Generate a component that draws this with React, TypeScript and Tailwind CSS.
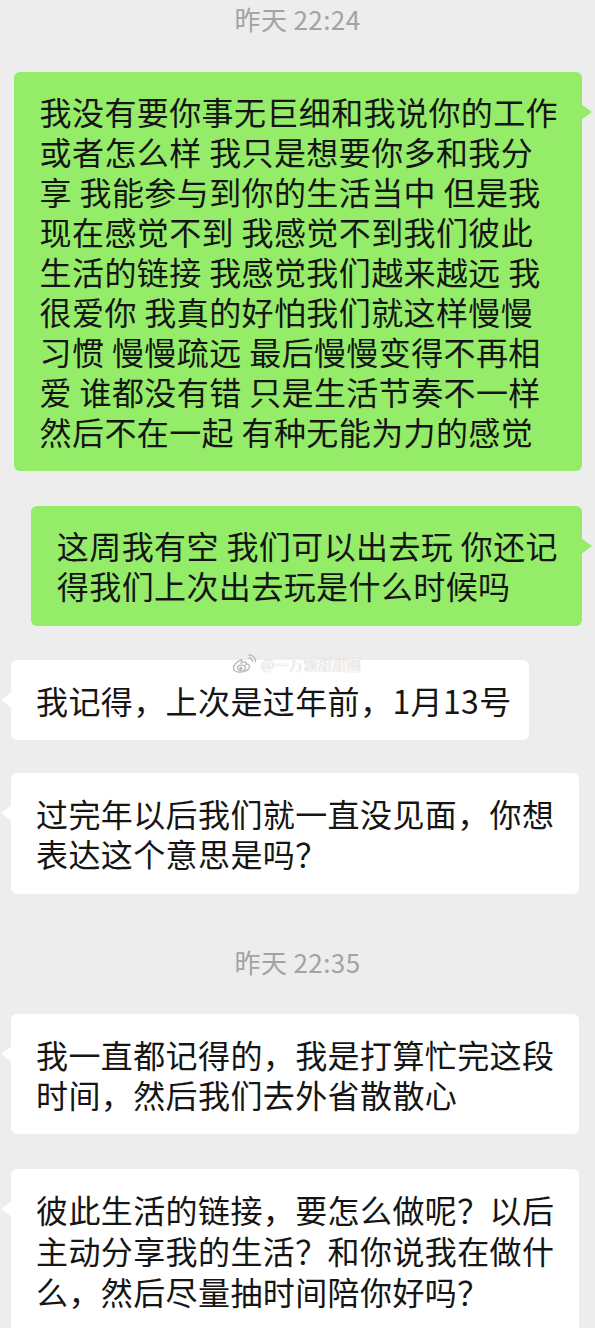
import type { ReactNode } from 'react';

const Time = ({ children, className = '' }: { children: ReactNode; className?: string }) => (
  <div className={`text-center text-[26px] leading-[38px] text-[#a3a3a3] ${className}`}>{children}</div>
);

const Mine = ({ lines, className = '' }: { lines: string[]; className?: string }) => (
  <div className={`relative self-end mr-[13px] rounded-[6px] bg-[#95ec69] pl-[26px] pr-[24px] pt-[19px] pb-[20px] ${className}`}>
    {lines.map((l, i) => (
      <div key={i} className="whitespace-pre">{l}</div>
    ))}
    <div className="absolute top-[32px] -right-[10px] h-0 w-0 border-y-[8px] border-l-[11px] border-y-transparent border-l-[#95ec69]" />
  </div>
);

const Theirs = ({
  lines,
  className = '',
  leading = 'leading-[40px]',
  children,
}: {
  lines: string[];
  className?: string;
  leading?: string;
  children?: ReactNode;
}) => (
  <div className={`relative self-start ml-[11px] rounded-[6px] bg-white pl-[25px] pt-[20px] pb-[20px] ${leading} ${className}`}>
    {lines.map((l, i) => (
      <div key={i} className="whitespace-pre">{l}</div>
    ))}
    <div className="absolute top-[32px] -left-[10px] h-0 w-0 border-y-[8px] border-r-[11px] border-y-transparent border-r-white" />
    {children}
  </div>
);

const Watermark = () => (
  <div className="absolute -top-[6px] left-[220px] flex items-center gap-[4px] text-[14px] leading-[18px] text-white/90 [text-shadow:0_0_1px_#a8a8a8]">
    <svg width="26" height="20" viewBox="0 0 26 20" fill="none" stroke="#b8b8b8" strokeWidth="1.3">
      <path d="M10 6c-4 1.5-8 5-7.5 8.5C3 18 9 19 13.5 17.5 18 16 19.5 13 18 11c-.8-1-2-1-3-.6.6-1.6 0-2.6-1.4-2.6-1 0-2.3.5-3.4 1 .9-2 .6-3.4-.2-3.4z" />
      <ellipse cx="10.5" cy="14" rx="4" ry="2.8" />
      <circle cx="9.8" cy="14.3" r="1" fill="#b8b8b8" />
      <path d="M18 4c2 0 3.5 1.5 3.5 3.5M18 1c3.8 0 6.5 2.7 6.5 6.5" strokeLinecap="round" />
    </svg>
    <span>@一万颗甜甜圈</span>
  </div>
);

export default function App() {
  return (
    <div className="flex h-[1328px] w-[595px] flex-col overflow-hidden bg-[#ededed] font-['Noto_Sans_CJK_SC','Noto_Sans',sans-serif] text-[32px] leading-[40px] tracking-[0.4px] text-[#151515]">
      <Time>昨天 22:24</Time>

      <Mine
        className="mt-[34px]"
        lines={[
          '我没有要你事无巨细和我说你的工作',
          '或者怎么样 我只是想要你多和我分',
          '享 我能参与到你的生活当中 但是我',
          '现在感觉不到 我感觉不到我们彼此',
          '生活的链接 我感觉我们越来越远 我',
          '很爱你 我真的好怕我们就这样慢慢',
          '习惯 慢慢疏远 最后慢慢变得不再相',
          '爱 谁都没有错 只是生活节奏不一样',
          '然后不在一起 有种无能为力的感觉',
        ]}
      />

      <Mine
        className="mt-[35px] pb-[21px]"
        lines={['这周我有空 我们可以出去玩 你还记', '得我们上次出去玩是什么时候吗']}
      />

      <Theirs className="mt-[34px] pr-[17px]" lines={['我记得，上次是过年前，1月13号']}>
        <Watermark />
      </Theirs>

      <Theirs
        className="mt-[33px] pr-[25px] pb-[21px]"
        lines={['过完年以后我们就一直没见面，你想', '表达这个意思是吗？']}
      />

      <Time className="mt-[49px]">昨天 22:35</Time>

      <Theirs
        className="mt-[33px] pr-[25px] pb-[19px]"
        lines={['我一直都记得的，我是打算忙完这段', '时间，然后我们去外省散散心']}
      />

      <Theirs
        className="mt-[35px] pr-[25px]"
        leading="leading-[41px]"
        lines={['彼此生活的链接，要怎么做呢？以后', '主动分享我的生活？和你说我在做什', '么，然后尽量抽时间陪你好吗？']}
      />
    </div>
  );
}
